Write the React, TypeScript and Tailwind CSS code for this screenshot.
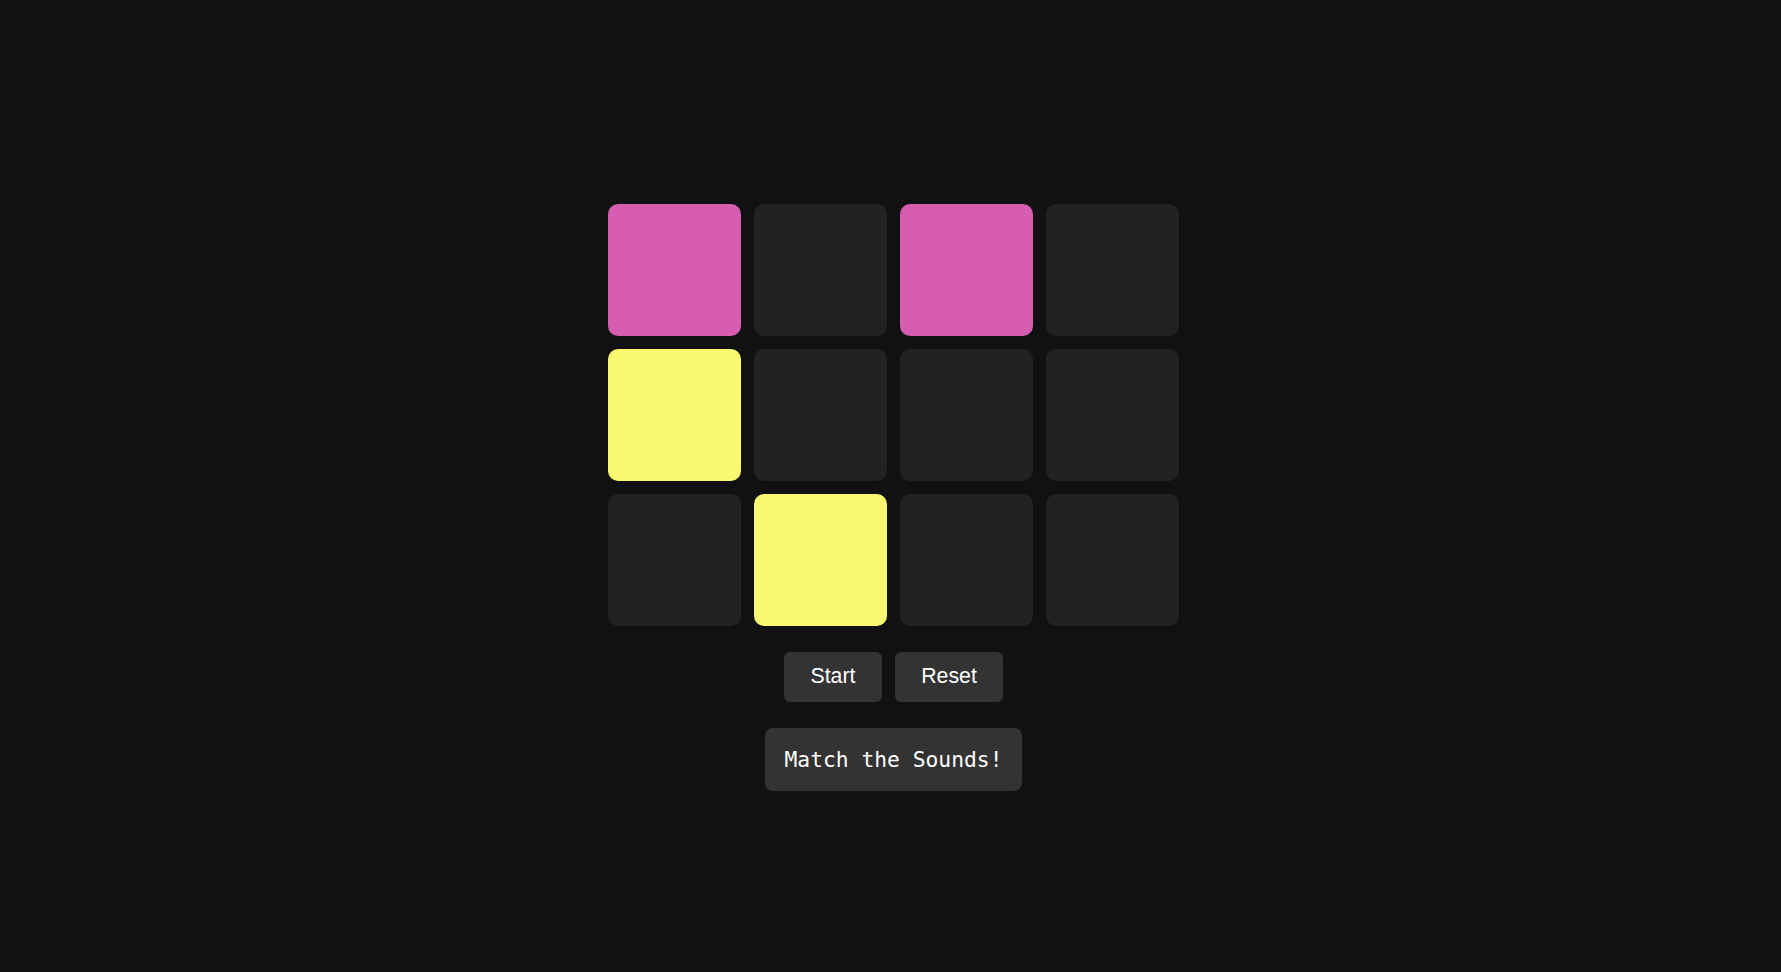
import React from 'react';

// 0 = off, 1 = pink, 2 = yellow
const pads: number[] = [1, 0, 1, 0, 2, 0, 0, 0, 0, 2, 0, 0];

const padColor = (v: number): string => {
    if (v === 1) return 'bg-[#d65db1]';
    if (v === 2) return 'bg-[#f9f871]';
    return 'bg-[#222222]';
};

export default function App() {
    return (
        <div className="min-h-[972px] w-full bg-[#111111] flex flex-col items-center pt-[204px] pl-[6px]">
            <div className="grid grid-cols-[repeat(4,133px)] auto-rows-[132px] gap-[13px]">
                {pads.map((p, i) => (
                    <button key={i} className={`rounded-[10px] ${padColor(p)}`} />
                ))}
            </div>

            <div className="flex gap-[13px] mt-[26px]" style={{ fontFamily: '"Liberation Sans", Arial, sans-serif' }}>
                <button className="h-[50px] w-[98px] rounded-[6px] bg-[#333333] text-white text-[21.3px]">Start</button>
                <button className="h-[50px] w-[108px] rounded-[6px] bg-[#333333] text-white text-[21.3px]">Reset</button>
            </div>

            <div
                className="mt-[26px] h-[63px] px-[20px] rounded-[8px] bg-[#333333] text-white text-[21.3px] flex items-center"
                style={{ fontFamily: '"DejaVu Sans Mono", "Liberation Mono", monospace' }}
            >
                Match the Sounds!
            </div>
        </div>
    );
}
